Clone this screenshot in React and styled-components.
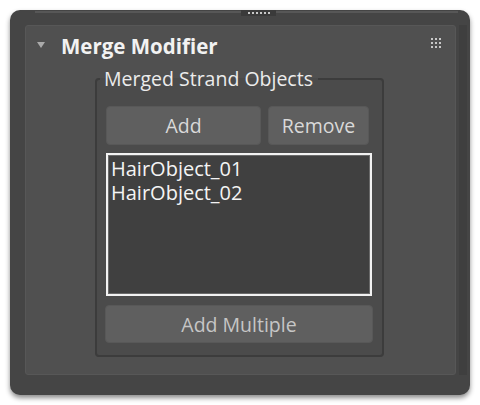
import React from 'react';
import styled, { createGlobalStyle } from 'styled-components';

const Global = createGlobalStyle`
  body {
    margin: 0;
    background: #ffffff;
    font-family: 'Open Sans', 'Liberation Sans', sans-serif;
  }
`

const Page = styled.div`
  padding: 10px;
  width: 460px;
`

const Rollout = styled.div`
  position: relative;
  height: 385px;
  box-sizing: border-box;
  padding: 15px 3px 20px 15px;
  display: flex;
  background: #454545;
  border-radius: 10px;
  box-shadow: 0 3px 5px rgba(0, 0, 0, 0.45);

  &::before {
    content: '';
    position: absolute;
    left: 25px;
    right: 12px;
    top: 1px;
    height: 2px;
    background: #575757;
  }
`

const Grip = styled.div`
  position: absolute;
  left: 231px;
  top: 0;
  width: 35px;
  height: 6px;
  background: #3a3a3a;
  display: flex;
  justify-content: center;
  align-items: center;
  gap: 2px;
`

const GripDot = styled.span`
  width: 2px;
  height: 2px;
  background: #c8c8c8;
`

const Panel = styled.div`
  flex: 1;
  background: #505050;
  border: 1px solid #575757;
  border-radius: 3px;
  display: flex;
  flex-direction: column;
`

const ScrollTrack = styled.div`
  width: 9px;
  margin-left: 3px;
  background: #3f3f3f;
`

const Header = styled.div`
  display: flex;
  align-items: center;
  height: 38px;
  padding: 1px 14px 0 11px;
`

const Caret = styled.span`
  width: 0;
  height: 0;
  border-left: 4px solid transparent;
  border-right: 4px solid transparent;
  border-top: 6px solid #aaaaaa;
  margin: -3px 16px 0 0;
`

const Title = styled.h1`
  flex: 1;
  margin: 0;
  font-size: 20.5px;
  font-weight: 700;
  color: #f2f2f2;
`

const DotGrid = styled.div`
  display: grid;
  grid-template-columns: repeat(3, 2px);
  gap: 2px;
  align-self: flex-start;
  margin-top: 11px;
`

const Group = styled.fieldset`
  margin: 3px 71px 0 69px;
  padding: 16px 9px 12px 9px;
  border: 2px solid #3c3c3c;
  border-radius: 4px;
  background: #4b4b4b;
  display: flex;
  flex-direction: column;
`

const Legend = styled.legend`
  margin-left: -6px;
  padding: 0 5px 0 4px;
  font-size: 19.5px;
  color: #ececec;
  line-height: 22px;
`

const ButtonRow = styled.div`
  display: flex;
  gap: 7px;
`

const Button = styled.button`
  width: ${p => p.$w}px;
  height: ${p => p.$h || 39}px;
  margin-left: ${p => p.$shift || 0}px;
  background: #5f5f5f;
  border: 1px solid #585858;
  border-radius: 4px;
  font-family: 'Open Sans', 'Liberation Sans', sans-serif;
  font-size: 19.5px;
  color: ${p => p.$muted ? '#c6c6c6' : '#d9d9d9'};
  padding: 0;
`

const List = styled.div`
  width: 266px;
  height: 143px;
  box-sizing: border-box;
  margin: 8px 0 9px 0;
  border: 2px solid #f2f2f2;
  box-shadow: inset 0 0 0 1px #6a6a6a;
  background: #404040;
  padding: 2px 3px;
`

const Item = styled.div`
  font-size: 20px;
  line-height: 24px;
  color: #f4f4f4;
`

export default function App() {
  return (
    <Page>
      <Global />
      <Rollout>
        <Grip>
          {[0, 1, 2, 3, 4, 5].map(i => <GripDot key={i} />)}
        </Grip>
        <Panel>
          <Header>
            <Caret />
            <Title>Merge Modifier</Title>
            <DotGrid>
              {[0, 1, 2, 3, 4, 5, 6, 7, 8].map(i => <GripDot key={i} />)}
            </DotGrid>
          </Header>
          <Group>
            <Legend>Merged Strand Objects</Legend>
            <ButtonRow>
              <Button $w={155}>Add</Button>
              <Button $w={101}>Remove</Button>
            </ButtonRow>
            <List>
              <Item>HairObject_01</Item>
              <Item>HairObject_02</Item>
            </List>
            <Button $w={268} $h={38} $shift={-1} $muted>Add Multiple</Button>
          </Group>
        </Panel>
        <ScrollTrack />
      </Rollout>
    </Page>
  );
}
